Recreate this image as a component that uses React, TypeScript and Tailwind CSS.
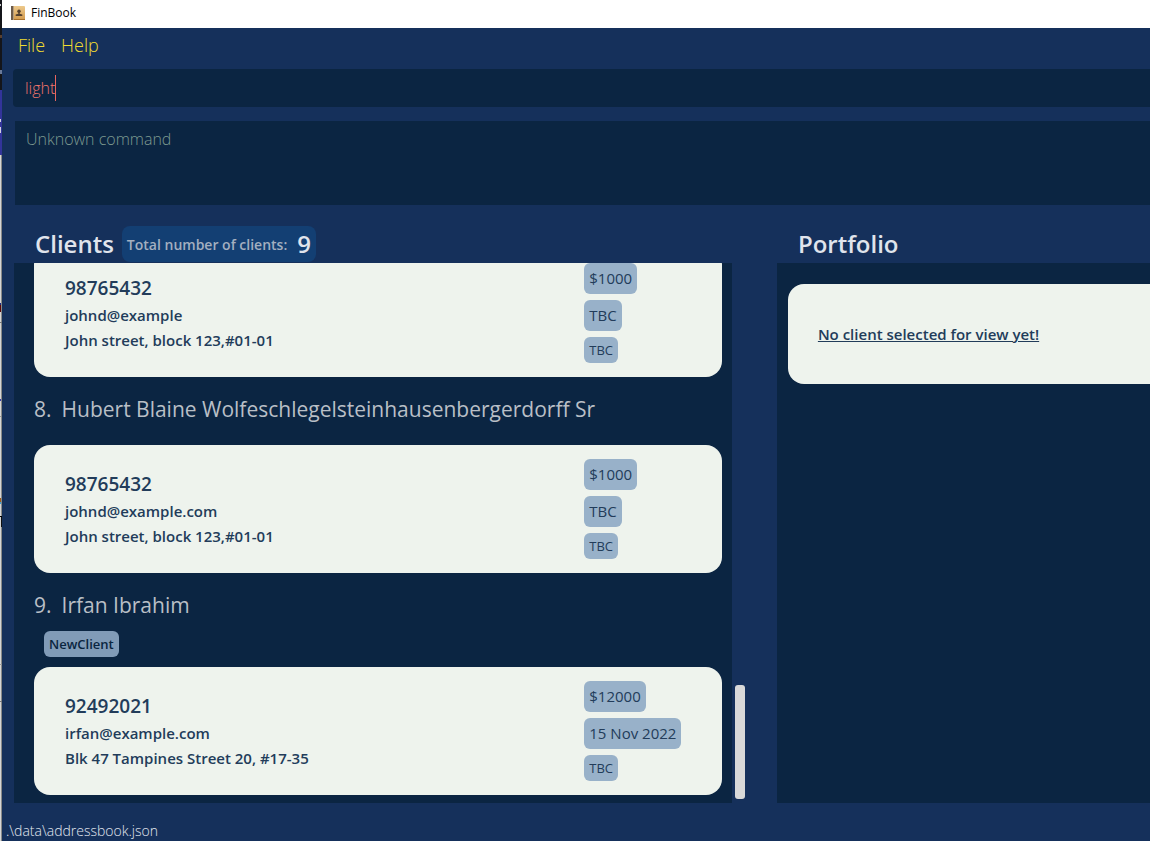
import React from "react";

type Client = {
  index: number;
  name?: string;
  labels: string[];
  phone: string;
  email: string;
  address: string;
  income: string;
  meeting: string;
  plan: string;
};

const clients: Client[] = [
  {
    index: 7,
    labels: [],
    phone: "98765432",
    email: "johnd@example",
    address: "John street, block 123,#01-01",
    income: "$1000",
    meeting: "TBC",
    plan: "TBC",
  },
  {
    index: 8,
    name: "Hubert Blaine Wolfeschlegelsteinhausenbergerdorff Sr",
    labels: [],
    phone: "98765432",
    email: "johnd@example.com",
    address: "John street, block 123,#01-01",
    income: "$1000",
    meeting: "TBC",
    plan: "TBC",
  },
  {
    index: 9,
    name: "Irfan Ibrahim",
    labels: ["NewClient"],
    phone: "92492021",
    email: "irfan@example.com",
    address: "Blk 47 Tampines Street 20, #17-35",
    income: "$12000",
    meeting: "15 Nov 2022",
    plan: "TBC",
  },
];

function BookIcon() {
  return (
    <svg width="14" height="14" viewBox="0 0 14 14" aria-hidden="true">
      <defs>
        <linearGradient id="cover" x1="0" y1="0" x2="0" y2="1">
          <stop offset="0" stopColor="#edc98c" />
          <stop offset="1" stopColor="#d39a4c" />
        </linearGradient>
      </defs>
      <rect width="14" height="14" rx="1" fill="url(#cover)" />
      <rect width="2" height="14" fill="#6b5a4a" />
      <rect x="2" width="1" height="14" fill="#b59c7c" />
      <rect x="3" y="13" width="11" height="1" fill="#a8702c" />
      <circle cx="8" cy="5.2" r="1.7" fill="#55412f" />
      <path d="M7.3 6h1.4v1.8l2.6.8V10H4.700V8.600l2.600-.8z" fill="#55412f" />
    </svg>
  );
}

function DesktopEdge() {
  return (
    <svg className="h-full w-[2px] shrink-0" aria-hidden="true">
      <rect width="2" height="100%" fill="#d6d6d6" />
      <rect x="1" width="1" height="100%" fill="#8a8a88" />
      <rect width="2" height="90" fill="#14151a" />
      <rect y="4" width="1" height="2" fill="#c8c8c8" />
      <rect y="35" width="2" height="3" fill="#5a4030" />
      <rect y="70" width="2" height="4" fill="#6a7a9a" />
      <rect y="90" width="2" height="65" fill="#33349a" />
      <rect y="119" width="1" height="3" fill="#d0d0e0" />
      <rect y="127" width="1" height="6" fill="#d0d0e0" />
      <rect y="303" width="1" height="2" fill="#1a2a80" />
      <rect y="305" width="1" height="7" fill="#5a0808" />
      <rect y="322" width="2" height="1" fill="#777777" />
      <rect y="399" width="1" height="2" fill="#3a3aa8" />
      <rect y="416" width="1" height="1" fill="#9a9a9a" />
      <rect y="498" width="1" height="4" fill="#a05a18" />
      <rect y="502" width="1" height="2" fill="#40a0d0" />
      <rect y="516" width="2" height="1" fill="#000000" />
      <rect x="1" y="517" width="1" height="10" fill="#111111" />
      <rect y="664" width="2" height="1" fill="#999999" />
      <rect y="701" width="2" height="1" fill="#777777" />
    </svg>
  );
}

function ClientItem({ client }: { client: Client }) {
  return (
    <li className="shrink-0 pt-4">
      {client.name && (
        <h3 className="flex gap-2.5 text-[21px] leading-8 text-[#b9bfc6]">
          <span>{client.index}.</span>
          <span className="whitespace-nowrap">{client.name}</span>
        </h3>
      )}
      <div className="my-2.5 flex gap-2 pl-2.5">
        {client.labels.map((label) => (
          <span
            key={label}
            className="rounded-md bg-[#819bb7] px-[5px] text-[13px] leading-[26px] font-semibold text-[#0a2540]"
          >
            {label}
          </span>
        ))}
      </div>
      <div className="grid grid-cols-[4fr_1fr] rounded-2xl bg-[#eef3ed] text-[#223c5a]">
        <div className="pt-[25px] pb-6 pl-[31px] text-[15px] leading-[25px] font-semibold">
          <p className="text-[19px] leading-[29px]">{client.phone}</p>
          <p>{client.email}</p>
          <p>{client.address}</p>
        </div>
        <div className="flex flex-col items-start gap-1.5 py-3.5 font-medium whitespace-nowrap">
          <span className="rounded-md bg-[#98b1c9] px-[5px] text-[15px] leading-[31px]">{client.income}</span>
          <span className="rounded-md bg-[#98b1c9] px-[5px] text-[15px] leading-[31px]">{client.meeting}</span>
          <span className="rounded-md bg-[#98b1c9] px-[5px] text-[13px] leading-[26px]">{client.plan}</span>
        </div>
      </div>
    </li>
  );
}

export default function App() {
  return (
    <div className="flex h-screen overflow-hidden font-['Open_Sans','Noto_Sans',sans-serif]">
      <DesktopEdge />
      <div className="flex min-w-0 flex-1 flex-col bg-[#15305b]">
        <header className="flex h-7 shrink-0 items-center gap-1.5 bg-white pb-[3px] pl-[9px] text-black">
          <BookIcon />
          <h1 className="text-[12px] leading-4">FinBook</h1>
        </header>

        <nav className="flex h-[41px] shrink-0 items-start gap-4 pt-[5px] pl-4 text-[18px] leading-6 font-light text-[#f0dc30]">
          <button type="button">File</button>
          <button type="button">Help</button>
        </nav>

        <label className="ml-[11px] flex h-[38px] shrink-0 items-center rounded-l-[4px] bg-[#0b2542] pl-3">
          <input
            type="text"
            aria-label="Command"
            defaultValue="light"
            className="field-sizing-content bg-transparent text-[16px] leading-6 font-light text-[#f0746c] outline-none"
          />
          <span className="h-[26px] w-px bg-[#e8665f]" />
        </label>

        <output className="mt-3.5 ml-[13px] block h-[84px] shrink-0 bg-[#0b2542] pt-1.5 pl-[11px] text-[16px] leading-6 font-light text-[#7d9a90]">
          Unknown command
        </output>

        <main className="mt-5 ml-3 grid min-h-0 flex-1 grid-cols-[658fr_45px_342fr] grid-rows-[38px_minmax(0,1fr)]">
          <div className="flex items-start gap-2 pl-[21px]">
            <h2 className="text-[24px] leading-[38px] font-semibold text-[#e0e4ec]">Clients</h2>
            <p className="mt-px flex h-9 items-center gap-2.5 rounded-lg bg-[#133f73] px-[5px] whitespace-nowrap">
              <span className="text-[14px] font-semibold text-[#a3afc0]">Total number of clients:</span>
              <span className="text-[24px] font-semibold text-[#e0e4ec]">9</span>
            </p>
          </div>
          <div />
          <h2 className="pl-[21px] text-[24px] leading-[38px] font-semibold text-[#e0e4ec]">Portfolio</h2>

          <ul className="flex flex-col justify-end overflow-hidden bg-[#0b2542] pr-2.5 pb-2 pl-5">
            {clients.map((client) => (
              <ClientItem key={client.index} client={client} />
            ))}
          </ul>
          <div className="flex flex-col justify-end pb-1 pl-[3px]">
            <div className="h-[114px] w-2.5 rounded-[3px] bg-[#d9d9d9]" />
          </div>
          <section className="bg-[#0b2542] pt-[21px] pl-[11px]">
            <div className="rounded-l-2xl bg-[#eef3ed] py-[38px] pl-[30px]">
              <p className="text-[15px] leading-6 font-semibold text-[#223c5a] underline">
                No client selected for view yet!
              </p>
            </div>
          </section>
        </main>

        <footer className="h-[38px] shrink-0 pt-[18px] pl-1 text-[14px] leading-5 font-light text-[#e3e8f0]">
          .\data\addressbook.json
        </footer>
      </div>
    </div>
  );
}
